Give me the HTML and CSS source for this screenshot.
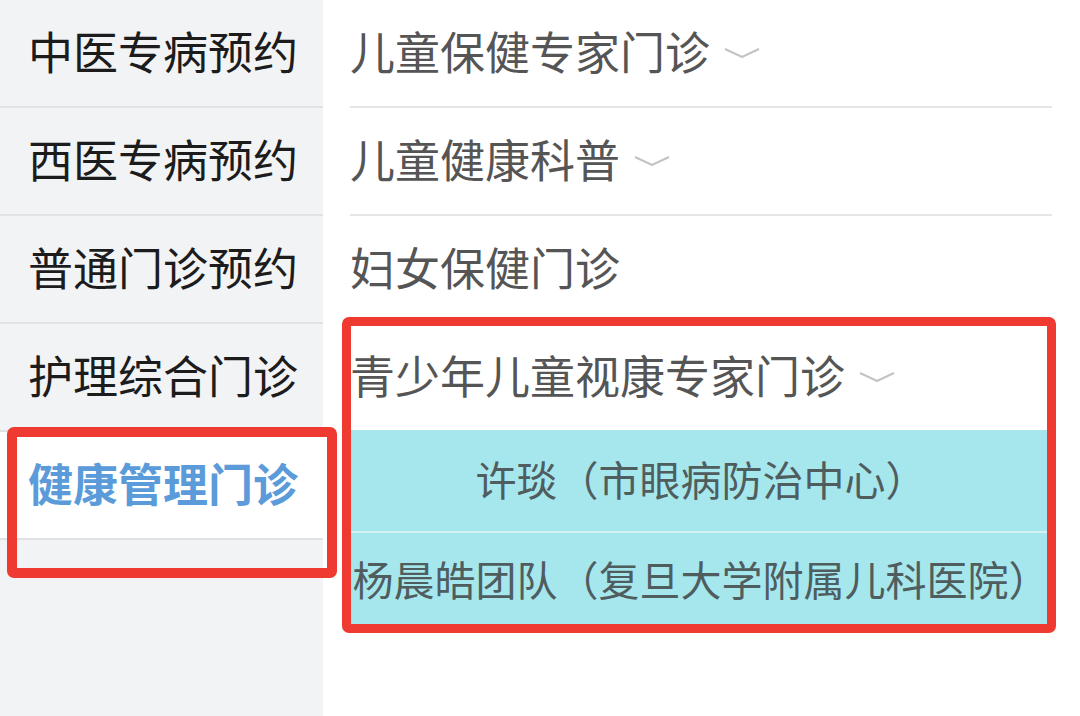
FILE: index.html
```html
<!DOCTYPE html>
<html lang="zh-CN">
<head>
  <meta charset="UTF-8" />
  <meta name="viewport" content="width=device-width, initial-scale=1.0"/>
  <title>预约挂号</title>
  <link rel="stylesheet" href="styles.css">
</head>
<body>
  <div class="page">
    <div class="sidebar">
      <div class="side-item">中医专病预约</div>
      <div class="side-item">西医专病预约</div>
      <div class="side-item">普通门诊预约</div>
      <div class="side-item">护理综合门诊</div>
      <div class="side-item active">健康管理门诊</div>
    </div>

    <div class="content">
      <div class="row">儿童保健专家门诊
        <svg class="chevron" viewBox="0 0 36 10"><polyline points="1,1 18,9 35,1"/></svg>
      </div>
      <div class="row">儿童健康科普
        <svg class="chevron" viewBox="0 0 36 10"><polyline points="1,1 18,9 35,1"/></svg>
      </div>
      <div class="row">妇女保健门诊</div>
      <div class="row open">青少年儿童视康专家门诊
        <svg class="chevron" viewBox="0 0 36 10"><polyline points="1,1 18,9 35,1"/></svg>
      </div>
      <div class="option">许琰（市眼病防治中心）</div>
      <div class="option last">杨晨皓团队（复旦大学附属儿科医院）</div>
    </div>
  </div>

  <!-- red marks drawn over the screenshot -->
  <div class="mark mark-side"></div>
  <div class="mark mark-list"></div>
</body>
</html>
```

FILE: styles.css
```css
body { margin: 0; background: #fff; font-family: "Noto Sans CJK SC", "Noto Sans", sans-serif; }
.page { display: flex; height: 716px; overflow: hidden; }

.sidebar { width: 323px; flex-shrink: 0; background: #f2f3f5; }
.side-item { height: 100px; border-bottom: 2px solid #e1e2e4; display: flex; align-items: center; padding: 0 0 6px 28px; font-size: 45px; color: #1c1c1c; }
.side-item.active { background: #fff; color: #5b9bd9; font-weight: bold; }

.content { width: 702px; flex: none; margin-left: 27px; }
.row { height: 100px; padding-bottom: 6px; border-bottom: 2px solid #e6e6e6; display: flex; align-items: center; font-size: 45px; color: #555; }
.row.open { border-bottom: none; }
.chevron { width: 36px; height: 10px; margin: 6px 0 0 14px; fill: none; stroke: #c2c2c2; stroke-width: 2; }

.option { height: 95px; padding-bottom: 6px; display: flex; align-items: center; justify-content: center; background: #a6e7ed; border-bottom: 2px solid #d3f2f5; font-size: 41px; color: #4f5d5f; white-space: nowrap; }
.option.last { height: 90px; border-bottom: none; }

.mark { position: absolute; border: 10px solid #ef3a31; border-radius: 7px; box-sizing: border-box; }
.mark-side { left: 7px; top: 427px; width: 330px; height: 151px; }
.mark-list { left: 342px; top: 317px; width: 714px; height: 316px; border-width: 9px; }
```
